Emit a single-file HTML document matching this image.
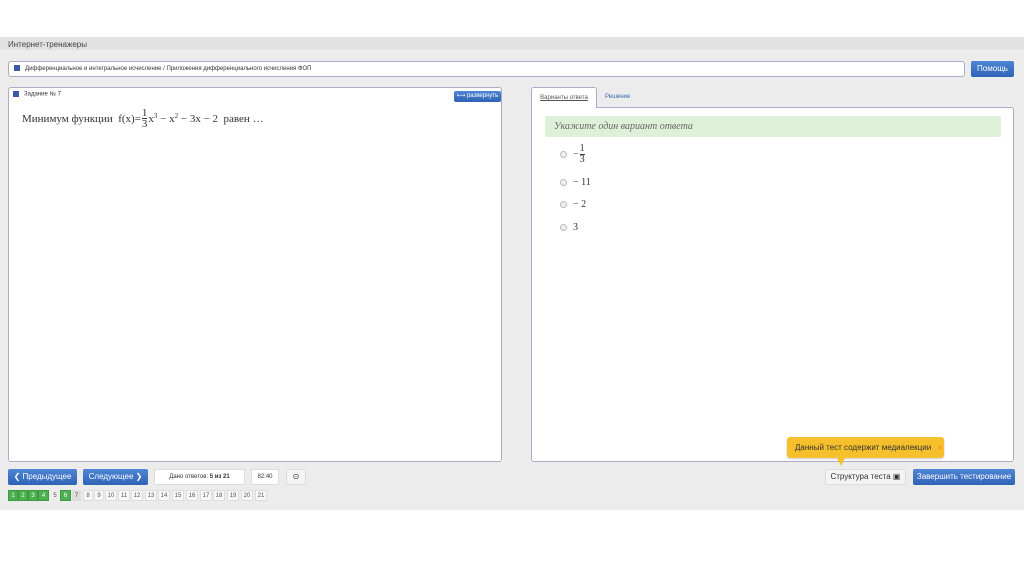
<!DOCTYPE html>
<html><head><meta charset="utf-8"><style>
*{box-sizing:border-box;margin:0;padding:0}
body{width:1024px;height:574px;background:#fff;font-family:"Liberation Sans",sans-serif;position:relative;overflow:hidden;color:#333}
.band{position:absolute;left:0;top:37px;width:1024px;height:473px;background:#ececec}
.hdr{position:absolute;left:0;top:37px;width:1024px;height:13px;background:#e2e2e2;font-size:8px;padding:3px 8px;color:#444}
.box{position:absolute;background:#fff;border:1px solid #a8adc8;border-radius:3px}
.sq{display:inline-block;width:6px;height:6px;background:#3a5aa8;margin-right:5px;vertical-align:middle}
.btn{position:absolute;border-radius:2px;font-size:8px;color:#fff;background:linear-gradient(#4f86d3,#2e62b6);text-align:center;line-height:16px;white-space:nowrap}
.ser{font-family:"Liberation Serif",serif}
.pg{position:absolute;top:490px;height:11px;font-size:6px;line-height:11px;text-align:center;border:1px solid #ddd;background:#f8f8f8;color:#555}
.g{background:#4caf50;color:#fff;border-color:#3d9a40}
.rad{display:inline-block;width:7px;height:7px;border:1px solid #bbb;border-radius:50%;background:#f0f0f0;vertical-align:middle;margin-right:6px}
.opt{position:absolute;left:560px;font-size:10px;white-space:nowrap}
.fr{display:inline-flex;flex-direction:column;vertical-align:middle;text-align:center;line-height:10px;margin:0 1px}
.fr span{display:block}
</style></head><body>
<div class="band"></div>
<div class="hdr">Интернет-тренажеры</div>
<div class="box" style="left:8px;top:61px;width:957px;height:16px;font-size:6px;line-height:14px;padding-left:5px"><span class="sq"></span>Дифференциальное и интегральное исчисление / Приложения дифференциального исчисления ФОП</div>
<div class="btn" style="left:971px;top:61px;width:43px;height:16px">Помощь</div>
<div class="box" style="left:8px;top:87px;width:494px;height:375px">
 <div style="position:absolute;left:4px;top:3px;font-size:6px"><span class="sq"></span>Задание № 7</div>
 <div class="btn" style="left:445px;top:3px;width:47px;height:11px;line-height:11px;font-size:6px">⟷ развернуть</div>
 <div class="ser" style="position:absolute;left:13px;top:20px;font-size:11px;white-space:nowrap;display:flex;align-items:center">Минимум функции &nbsp;f(x)=<span class="fr"><span>1</span><span style="border-top:1px solid #333">3</span></span>x<sup style="font-size:7px;align-self:flex-start;margin-top:4px">3</sup>&nbsp;− x<sup style="font-size:7px;align-self:flex-start;margin-top:4px">2</sup>&nbsp;− 3x − 2 &nbsp;равен …</div>
</div>
<div style="position:absolute;left:531px;top:87px;width:66px;height:21px;background:#fff;border:1px solid #a8adc8;border-bottom:none;border-radius:3px 3px 0 0;font-size:6px;line-height:20px;text-align:center;text-decoration:underline;color:#555;z-index:2">Варианты ответа</div>
<div style="position:absolute;left:605px;top:87px;font-size:6px;line-height:20px;color:#3a6ab0">Решение</div>
<div class="box" style="left:531px;top:107px;width:483px;height:355px;border-radius:0 3px 3px 3px"></div>
<div style="position:absolute;left:545px;top:116px;width:456px;height:21px;background:#dff0d8;border-radius:2px;font-family:'Liberation Serif',serif;font-style:italic;font-size:10px;line-height:21px;padding-left:9px;color:#666">Укажите один вариант ответа</div>
<div class="opt ser" style="top:144px;display:flex;align-items:center"><span class="rad"></span>− <span class="fr"><span>1</span><span style="border-top:1px solid #333">3</span></span></div>
<div class="opt ser" style="top:177px"><span class="rad"></span>− 11</div>
<div class="opt ser" style="top:199px"><span class="rad"></span>− 2</div>
<div class="opt ser" style="top:222px"><span class="rad"></span>3</div>
<div class="btn" style="left:8px;top:469px;width:69px;height:16px">❮ Предыдущее</div>
<div class="btn" style="left:83px;top:469px;width:65px;height:16px">Следующее ❯</div>
<div style="position:absolute;left:154px;top:469px;width:91px;height:16px;background:#fff;border:1px solid #ddd;font-size:6px;line-height:14px;text-align:center">Дано ответов: <b>5 из 21</b></div>
<div style="position:absolute;left:251px;top:469px;width:28px;height:16px;background:#fff;border:1px solid #ddd;font-size:6px;line-height:14px;text-align:center">82:40</div>
<div style="position:absolute;left:286px;top:469px;width:20px;height:16px;background:#f4f4f4;border:1px solid #ddd;font-size:8px;line-height:14px;text-align:center">⊙</div>
<div class="pg g" style="left:8px;width:10px">1</div><div class="pg g" style="left:18px;width:10px">2</div><div class="pg g" style="left:28px;width:10px">3</div><div class="pg g" style="left:38px;width:11px">4</div>
<div class="pg" style="left:50px;width:10px;border-color:transparent;background:transparent">5</div>
<div class="pg g" style="left:60px;width:11px">6</div>
<div class="pg" style="left:72px;width:9px;background:#ddd">7</div>
<div class="pg" style="left:83px;width:10px">8</div><div class="pg" style="left:94px;width:10px">9</div>
<div class="pg" style="left:105px;width:12px">10</div><div class="pg" style="left:118px;width:12px">11</div><div class="pg" style="left:131px;width:12px">12</div><div class="pg" style="left:145px;width:12px">13</div><div class="pg" style="left:158px;width:12px">14</div><div class="pg" style="left:172px;width:12px">15</div><div class="pg" style="left:186px;width:12px">16</div><div class="pg" style="left:200px;width:12px">17</div><div class="pg" style="left:213px;width:12px">18</div><div class="pg" style="left:227px;width:12px">19</div><div class="pg" style="left:241px;width:12px">20</div><div class="pg" style="left:255px;width:12px">21</div>
<div style="position:absolute;left:787px;top:437px;width:157px;height:21px;background:#f5c02c;border-radius:3px;font-size:8px;line-height:21px;padding-left:8px;color:#333;white-space:nowrap;box-shadow:0 1px 2px rgba(0,0,0,.2)">Данный тест содержит медиалекции <span style="color:#e8803a;margin-left:4px">×</span></div>
<div style="position:absolute;left:837px;top:458px;width:0;height:0;border-left:4px solid transparent;border-right:4px solid transparent;border-top:8px solid #f5c02c"></div>
<div style="position:absolute;left:825px;top:469px;width:81px;height:16px;background:#f4f4f4;border:1px solid #ddd;font-size:8px;line-height:14px;text-align:center;white-space:nowrap">Структура теста ▣</div>
<div class="btn" style="left:913px;top:469px;width:102px;height:16px">Завершить тестирование</div>
</body></html>
